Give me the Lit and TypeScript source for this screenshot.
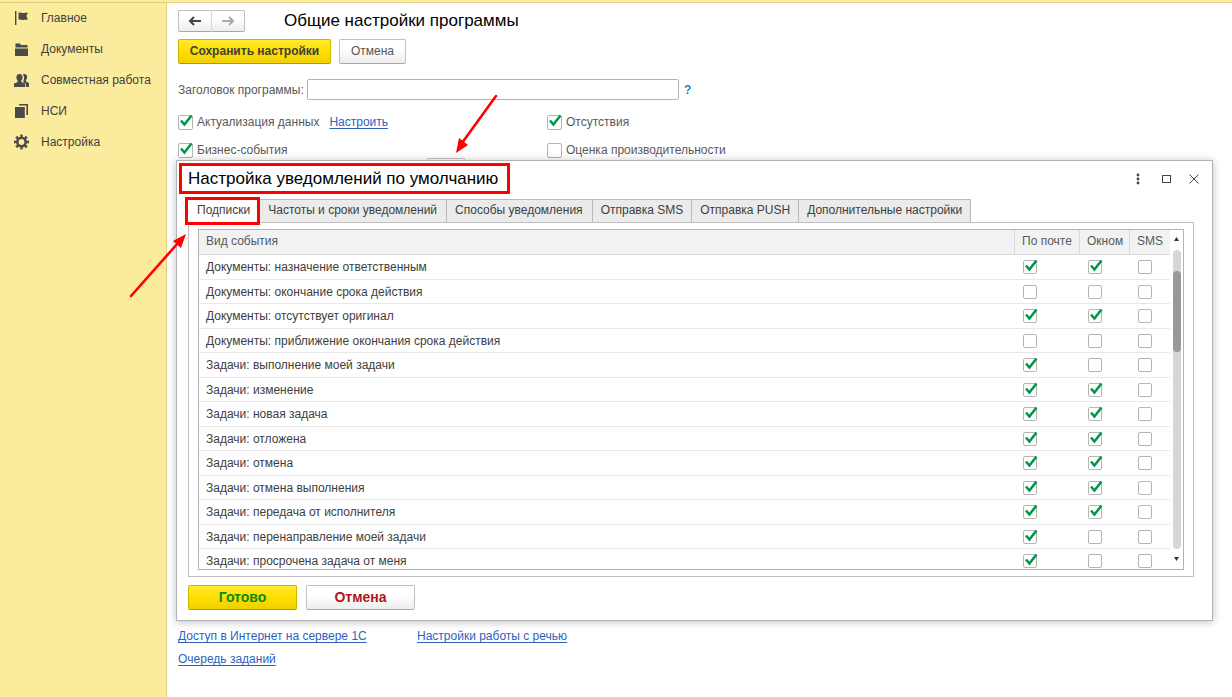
import { LitElement, html, css, svg } from "lit";
import { customElement, state } from "lit/decorators.js";

interface EventRow {
  name: string;
  mail: boolean;
  popup: boolean;
  sms: boolean;
}

const row = (name: string, mail: boolean, popup: boolean): EventRow => ({ name, mail, popup, sms: false });

const EVENTS: EventRow[] = [
  row("Документы: назначение ответственным", true, true),
  row("Документы: окончание срока действия", false, false),
  row("Документы: отсутствует оригинал", true, true),
  row("Документы: приближение окончания срока действия", false, false),
  row("Задачи: выполнение моей задачи", true, false),
  row("Задачи: изменение", true, true),
  row("Задачи: новая задача", true, true),
  row("Задачи: отложена", true, true),
  row("Задачи: отмена", true, true),
  row("Задачи: отмена выполнения", true, true),
  row("Задачи: передача от исполнителя", true, true),
  row("Задачи: перенаправление моей задачи", true, false),
  row("Задачи: просрочена задача от меня", true, false),
];

const TABS = [
  "Подписки",
  "Частоты и сроки уведомлений",
  "Способы уведомления",
  "Отправка SMS",
  "Отправка PUSH",
  "Дополнительные настройки",
];

const NAV = [
  {
    label: "Главное",
    icon: svg`<path d="M1 1h1.400v14H1z"/><path d="M4.500 2.500c1.500-.4 2.800.4 4.300.4 1.600 0 3-.2 5.200-.2l-1.600 3.400L14 9.600c-2 .1-3.500.3-5.200.3-1.500 0-2.800-.7-4.300-.4z"/>`,
  },
  {
    label: "Документы",
    icon: svg`<path d="M2 2.500h4l1 1.500h6.500v2.500h-12V2.500z"/><path d="M1 7.500h13V15H1z"/>`,
  },
  {
    label: "Совместная работа",
    icon: svg`<path d="M9 2.200c2.700-.7 4.400.9 4.100 3.200-.1 1.200-.5 2-1.100 2.700v1.300l3 1.600v4h-3l-.5-3.400-2.500-1.500c1.400-2.300 1.500-5.500 0-7.900z"/><path d="M5.500 2C3.200 2 2.200 3.600 2.400 5.700c.1 1.300.5 2.200 1.200 2.900v1.300L0 11.500V15h11v-3.500L7.400 9.900V8.600c.7-.7 1.100-1.600 1.200-2.900C8.800 3.600 7.800 2 5.500 2z"/>`,
  },
  {
    label: "НСИ",
    icon: svg`<path d="M5 1h9v11h-1.600V2.600H5z"/><path d="M1 4h9.800v11H1z"/>`,
  },
  {
    label: "Настройка",
    icon: svg`<path fill="none" stroke="#4a4a4a" stroke-width="2.600" stroke-dasharray="2.600 2.500" stroke-dashoffset="1.300" d="M13.700 8a6.200 6.200 0 1 1-12.400 0 6.200 6.200 0 1 1 12.400 0z" pathLength="40.800"/><circle cx="7.500" cy="8" r="4.200" fill="none" stroke="#4a4a4a" stroke-width="2.600"/>`,
  },
];

@customElement("app-root")
export class AppRoot extends LitElement {
  @state() private activeTab = 0;

  static styles = css`
    :host {
      display: block;
      font: 12px/16px "Liberation Sans", Arial, sans-serif;
      color: #404040;
    }
    * {
      box-sizing: border-box;
    }
    .page {
      position: relative;
      display: grid;
      grid-template-columns: 167px 1fr;
      min-height: 100vh;
      overflow: hidden;
      background: #fff;
      border-top: 2px solid #fbec9d;
    }
    .side {
      background: #fbec9d;
      border-right: 1px solid #dfce80;
      box-shadow: inset 0 1px 0 #dfce80;
    }
    .nav {
      list-style: none;
      margin: 0;
      padding: 0;
    }
    .nav-link {
      display: flex;
      align-items: center;
      gap: 12px;
      height: 31px;
      padding-left: 14px;
      color: #404040;
      text-decoration: none;
      white-space: nowrap;
    }
    .nav-icon {
      width: 15px;
      height: 16px;
      fill: #4a4a4a;
      flex: none;
    }
    .main {
      position: relative;
      border-top: 1px solid #e5d78f;
      padding: 7px 20px 30px 11px;
    }
    .head {
      display: flex;
      align-items: center;
      gap: 39px;
    }
    .title {
      margin: 0;
      font-size: 17px;
      line-height: 20px;
      font-weight: 400;
      color: #000;
    }
    .btn {
      height: 25px;
      padding: 0 0 1px;
      border: 1px solid #c0c0c0;
      border-bottom-color: #a8a8a8;
      border-radius: 2px;
      background: linear-gradient(#fff, #fff 40%, #ededed);
      font: inherit;
      color: #555;
    }
    .btn-primary {
      border-color: #d0b400;
      border-bottom-color: #b09800;
      background: linear-gradient(#ffea2e, #ffe000 45%, #f0d000);
      font-weight: 700;
      color: #404040;
    }
    .history {
      display: flex;
    }
    .history .btn {
      width: 34px;
      height: 22px;
      display: grid;
      place-items: center;
    }
    .history .btn:first-child {
      border-radius: 2px 0 0 2px;
      border-right-color: #d8d8d8;
    }
    .history .btn:last-child {
      border-left: 0;
      border-radius: 0 2px 2px 0;
      width: 33px;
    }
    .actions {
      display: flex;
      gap: 8px;
      margin-top: 7px;
    }
    .save {
      width: 153px;
    }
    .cancel {
      width: 67px;
    }
    .field {
      display: flex;
      align-items: center;
      margin-top: 15px;
      color: #595959;
    }
    .field-label {
      width: 129px;
      white-space: nowrap;
    }
    .field-input {
      width: 372px;
      height: 21px;
      border: 1px solid #b3b3b3;
      border-radius: 2px;
      padding: 0 6px;
      font: inherit;
    }
    .help {
      margin-left: 5px;
      color: #1a83c8;
      text-decoration: none;
      font-weight: 700;
    }
    .options {
      display: grid;
      grid-template-columns: 369px 1fr;
      grid-auto-rows: 28px;
      margin-top: 8px;
      color: #595959;
    }
    .option {
      display: flex;
      align-items: center;
      gap: 10px;
    }
    .option-label {
      display: flex;
      align-items: center;
      gap: 4px;
    }
    .option-more {
      grid-column: 1 / -1;
      height: 22px;
      width: 38px;
      margin: -6px 0 0 249px;
    }
    .link {
      color: #2f62bd;
      text-decoration: underline 1px;
      text-underline-offset: 2px;
      text-decoration-skip-ink: none;
    }
    .links {
      display: grid;
      grid-template-columns: 239px 1fr;
      grid-auto-rows: 23px;
      justify-items: start;
      align-items: center;
      margin-top: 432px;
    }
    .check {
      appearance: none;
      flex: none;
      display: block;
      width: 15px;
      height: 15px;
      margin: 0;
      border: 1px solid #b5b5b5;
      border-radius: 2px;
      background: #fff;
    }
    .table .check {
      width: 14px;
      height: 14px;
    }
    .check:checked::after {
      content: "";
      display: block;
      width: 13px;
      height: 13px;
      margin-top: -2px;
      margin-left: 1px;
      background: url("data:image/svg+xml,%3Csvg xmlns='http://www.w3.org/2000/svg' viewBox='0 0 13 13'%3E%3Cpath d='M1 6.500L4.400 10.500 11.500 1.500' fill='none' stroke='%23009646' stroke-width='2.500'/%3E%3C/svg%3E");
    }
    .dialog {
      position: absolute;
      top: 157px;
      left: 9px;
      right: 19px;
      background: #fff;
      border: 1px solid #b3b3b3;
      box-shadow: 0 1px 8px rgba(0, 0, 0, 0.25);
      padding: 2px 18px 10px 11px;
    }
    .dialog-head {
      display: flex;
      justify-content: space-between;
      align-items: center;
    }
    .dialog-title {
      margin: 0 0 0 -9px;
      width: 331px;
      border: 3px solid #fe0000;
      padding: 2px 6px 1px;
      font-size: 17px;
      line-height: 22px;
      font-weight: 400;
      color: #000;
      white-space: nowrap;
    }
    .window-tools {
      display: flex;
      gap: 12px;
      margin-right: -8px;
    }
    .tool {
      width: 16px;
      height: 16px;
      padding: 0;
      border: 0;
      background: none;
      fill: none;
      stroke: #444;
    }
    .tool svg {
      display: block;
    }
    .tabs {
      display: flex;
      margin-top: 5px;
    }
    .tab {
      position: relative;
      height: 23px;
      padding: 0 8px 2px;
      border: 1px solid #b9b9b9;
      border-width: 1px 1px 0 0;
      background: #ebebeb;
      font: inherit;
      color: #404040;
      white-space: nowrap;
    }
    .tab:first-child {
      padding: 0 9px 2px;
    }
    .tab:nth-child(2),
    .tab:nth-child(3) {
      padding-right: 9px;
    }
    .tab[aria-selected="true"] {
      background: #fff;
    }
    .tab-mark {
      position: absolute;
      inset: -3px -1px -3px -3px;
      border: 3px solid #fe0000;
      z-index: 1;
    }
    .panel {
      border: 1px solid #bfbfbf;
      padding: 6px 9px;
    }
    .grid {
      display: grid;
      grid-template-columns: 1fr 13px;
      height: 341px;
      overflow: hidden;
      border: 1px solid #b3b3b3;
    }
    .viewport {
      overflow: hidden;
    }
    .table {
      width: 100%;
      border-collapse: separate;
      border-spacing: 0;
      table-layout: fixed;
    }
    .table th {
      height: 25px;
      padding: 0 7px 2px;
      background: #f2f2f2;
      border-bottom: 1px solid #dcdcdc;
      border-left: 1px solid #dcdcdc;
      font-weight: 400;
      text-align: left;
      color: #595959;
    }
    .table th:first-child {
      border-left: 0;
    }
    .table td {
      height: 24px;
      padding: 0 9px;
      border-bottom: 1px solid #e8e8e8;
      white-space: nowrap;
    }
    .table td:first-child {
      padding-left: 7px;
    }
    .table tr:nth-child(odd) td {
      height: 25px;
    }
    .col-mail {
      width: 65px;
    }
    .col-popup {
      width: 50px;
    }
    .col-sms {
      width: 41px;
    }
    .scroll {
      display: flex;
      flex-direction: column;
      align-items: center;
      padding: 7px 0 8px;
    }
    .track {
      flex: 1;
      width: 8px;
      margin: 9px 0 8px;
      padding-top: 21px;
      border-radius: 4px;
      background: #d6d6d6;
    }
    .thumb {
      height: 81px;
      border-radius: 4px;
      background: #999;
    }
    .dialog-foot {
      display: flex;
      gap: 9px;
      margin-top: 8px;
    }
    .dialog-foot .btn {
      width: 109px;
      font-size: 14px;
      font-weight: 700;
    }
    .dialog-foot .ready {
      color: #0a8a0a;
    }
    .dialog-foot .dismiss {
      color: #b01818;
    }
    .marks {
      position: absolute;
      top: -2px;
      left: 0;
      pointer-events: none;
      stroke: #fe0000;
      fill: #fe0000;
    }
  `;

  private check(checked: boolean, label: string) {
    return html`<input class="check" type="checkbox" aria-label=${label} .checked=${checked} />`;
  }

  private option(label: string, checked: boolean, more: unknown = "") {
    return html`<div class="option">
      <label class="option-label"><input class="check" type="checkbox" .checked=${checked} />${label}</label>${more}
    </div>`;
  }

  private renderDialog() {
    return html`<section class="dialog" role="dialog" aria-labelledby="dialog-title">
      <div class="dialog-head">
        <h2 class="dialog-title" id="dialog-title">Настройка уведомлений по умолчанию</h2>
        <div class="window-tools">
          <button class="tool" aria-label="Ещё">
            <svg width="16" height="16"><g fill="#444" stroke="none"><circle cx="8" cy="4" r="1.400" /><circle cx="8" cy="8" r="1.400" /><circle cx="8" cy="12" r="1.400" /></g></svg>
          </button>
          <button class="tool" aria-label="Развернуть">
            <svg width="16" height="16"><rect x="4.500" y="4.500" width="8" height="7" /></svg>
          </button>
          <button class="tool" aria-label="Закрыть">
            <svg width="16" height="16"><path d="M3.500 3.500l9 9M12.500 3.500l-9 9" /></svg>
          </button>
        </div>
      </div>
      <div class="tabs" role="tablist">
        ${TABS.map(
          (tab, i) => html`<button
            class="tab"
            role="tab"
            aria-selected=${i === this.activeTab ? "true" : "false"}
            @click=${() => (this.activeTab = i)}
          >${tab}${i === 0 ? html`<span class="tab-mark"></span>` : ""}</button>`
        )}
      </div>
      <div class="panel" role="tabpanel">
        <div class="grid">
          <div class="viewport">
            <table class="table">
              <colgroup><col /><col class="col-mail" /><col class="col-popup" /><col class="col-sms" /></colgroup>
              <thead>
                <tr><th>Вид события</th><th>По почте</th><th>Окном</th><th>SMS</th></tr>
              </thead>
              <tbody>
                ${EVENTS.map(
                  (e) => html`<tr>
                    <td>${e.name}</td>
                    <td>${this.check(e.mail, "По почте")}</td>
                    <td>${this.check(e.popup, "Окном")}</td>
                    <td>${this.check(e.sms, "SMS")}</td>
                  </tr>`
                )}
              </tbody>
            </table>
          </div>
          <div class="scroll">
            <svg width="5" height="4"><path d="M0 4L2.500 0 5 4z" fill="#333" /></svg>
            <div class="track"><div class="thumb"></div></div>
            <svg width="5" height="4"><path d="M0 0h5L2.500 4z" fill="#333" /></svg>
          </div>
        </div>
      </div>
      <div class="dialog-foot">
        <button class="btn btn-primary ready">Готово</button>
        <button class="btn dismiss">Отмена</button>
      </div>
    </section>`;
  }

  render() {
    return html`<div class="page">
      <nav class="side">
        <ul class="nav">
          ${NAV.map(
            (n) => html`<li><a class="nav-link" href="#"><svg class="nav-icon" viewBox="0 0 15 16">${n.icon}</svg>${n.label}</a></li>`
          )}
        </ul>
      </nav>
      <main class="main">
        <header class="head">
          <div class="history">
            <button class="btn" aria-label="Назад">
              <svg width="14" height="10" fill="none" stroke="#444" stroke-width="2"><path d="M13 5H2M6 1L2 5l4 4" /></svg>
            </button>
            <button class="btn" aria-label="Вперёд">
              <svg width="14" height="10" fill="none" stroke="#aaa" stroke-width="2"><path d="M1 5h11M8 1l4 4-4 4" /></svg>
            </button>
          </div>
          <h1 class="title">Общие настройки программы</h1>
        </header>
        <div class="actions">
          <button class="btn btn-primary save">Сохранить настройки</button>
          <button class="btn cancel">Отмена</button>
        </div>
        <div class="field">
          <label class="field-label" for="app-title">Заголовок программы:</label>
          <input class="field-input" id="app-title" type="text" />
          <a class="help" href="#">?</a>
        </div>
        <div class="options">
          ${this.option("Актуализация данных", true, html`<a class="link" href="#">Настроить</a>`)}
          ${this.option("Отсутствия", true)}
          ${this.option("Бизнес-события", true)}
          ${this.option("Оценка производительности", false)}
          <button class="btn option-more" aria-label="Ещё"></button>
        </div>
        <div class="links">
          <a class="link" href="#">Доступ в Интернет на сервере 1С</a>
          <a class="link" href="#">Настройки работы с речью</a>
          <a class="link" href="#">Очередь заданий</a>
        </div>
        ${this.renderDialog()}
      </main>
      <svg class="marks" width="520" height="310">
        <path d="M496 96L462 143M131 296L178 243" fill="none" stroke-width="2.600" stroke-linecap="round" />
        <path d="M456 153l3-15 9 7zM186 234l-5 14-8-7z" stroke="none" />
      </svg>
    </div>`;
  }
}
